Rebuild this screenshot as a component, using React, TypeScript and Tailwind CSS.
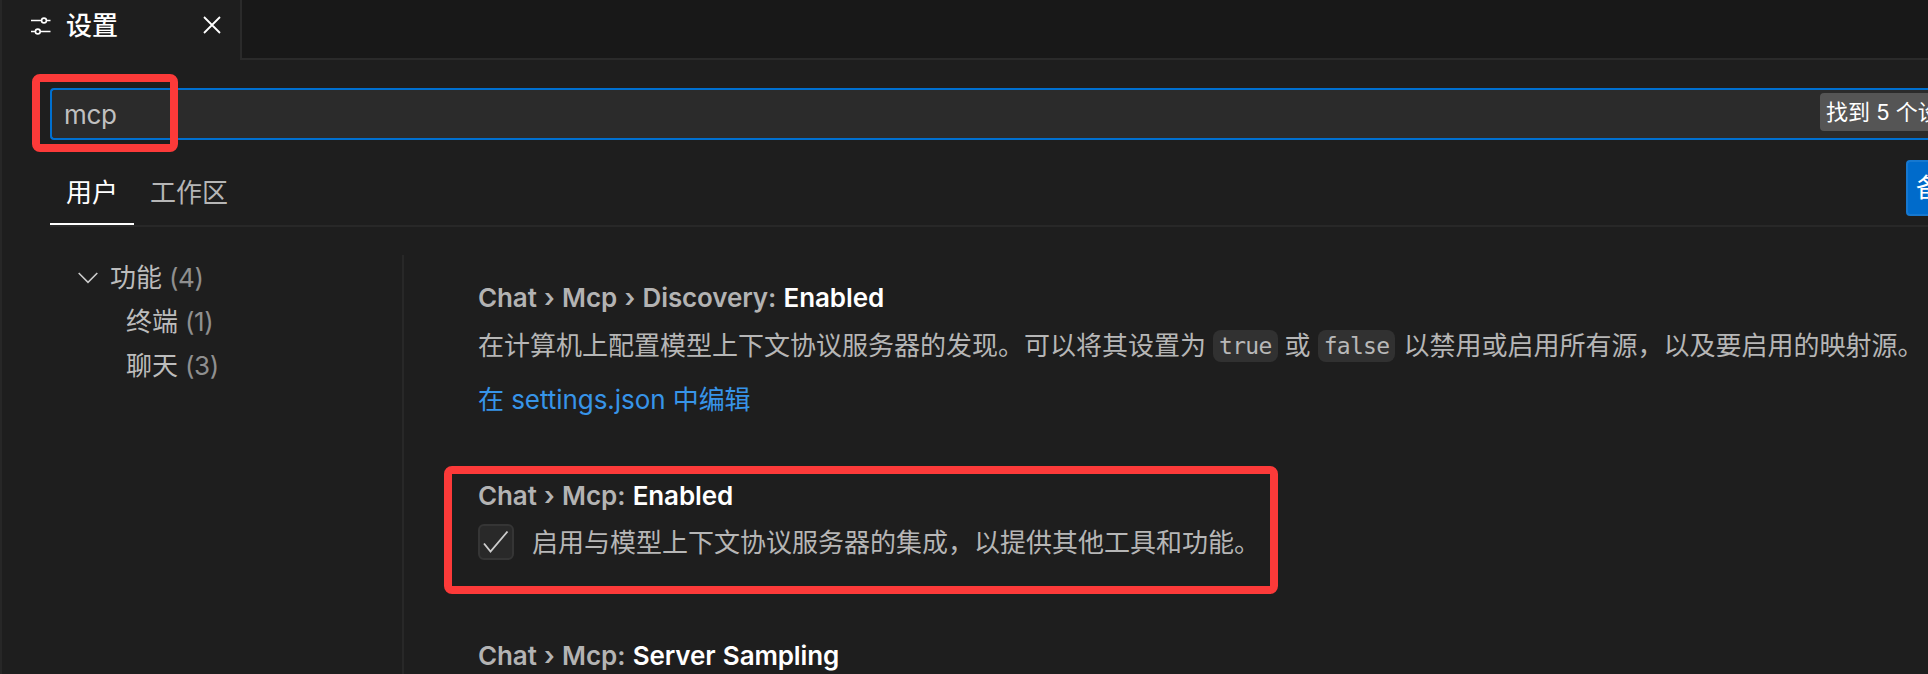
import React from "react";

const Slider = () => (
  <svg width="20" height="20" viewBox="0 0 20 20" fill="none" stroke="#fff" strokeWidth="1.6" className="shrink-0">
    <path d="M0 4.500h10.500M15.500 4.500h4M0 15.500h4M9.500 15.500h10" />
    <circle cx="13" cy="4.500" r="2.400" />
    <circle cx="6.800" cy="15.500" r="2.400" />
  </svg>
);

const Title = ({ path, name }: { path: string; name: string }) => (
  <h3 className="flex h-[36px] items-center whitespace-pre font-semibold tracking-[-0.11px] text-[#b3b3b3] [word-spacing:0.9px]">
    <span>{path} </span>
    <span className="text-white">{name}</span>
  </h3>
);

const Code = ({ children }: { children: React.ReactNode }) => (
  <code className="mx-[7px] flex h-8 items-center rounded-lg bg-[#313131] pl-[6px] pr-[6px] font-['DejaVu_Sans_Mono',monospace] text-[23px] tracking-[-0.7px] text-[#b8b8b8]">
    {children}
  </code>
);

const Row = ({ label, count, indent }: { label: string; count: number; indent?: boolean }) => (
  <div className={indent ? "flex h-11 items-center pl-[126px]" : "flex h-11 items-center pl-[78px]"}>
    {!indent && (
      <svg width="20" height="12" viewBox="0 0 20 12" fill="none" stroke="#ccc" strokeWidth="1.6" className="mr-3">
        <path d="M0.700 1 10 10.300 19.300 1" />
      </svg>
    )}
    <span className="text-[#bcbcbc]">{label}</span>
    <span className="ml-[7px] tracking-[-0.4px] text-[#8f8f8f]">({count})</span>
  </div>
);

export default function App() {
  return (
    <div className="relative flex h-[674px] w-[1928px] flex-col overflow-hidden bg-[#1e1e1e] font-['Inter','Noto_Sans_CJK_SC',sans-serif] text-[26px] leading-[36px] text-[#b6b6b6]">
      <header className="flex h-[60px] shrink-0">
        <div className="flex w-[242px] items-center border-r-2 border-[#2a2a2a] pb-[9px] pl-[31px] pr-[19px] text-white">
          <Slider />
          <span className="ml-[15px] font-medium">设置</span>
          <svg width="18" height="18" viewBox="0 0 18 18" fill="none" stroke="#fff" strokeWidth="1.8" className="mb-px ml-auto">
            <path d="M1 1 17 17M17 1 1 17" />
          </svg>
        </div>
        <div className="flex-1 border-b-2 border-[#2a2a2a] bg-[#181818]" />
      </header>

      <div className="ml-[50px] mt-7 flex h-[52px] shrink-0 items-center rounded-l border-y-2 border-l-2 border-[#0070d0] bg-[#2b2b2b] pl-3">
        <span className="pt-[2px] tracking-[-0.3px] text-[#c0c0c0]">mcp</span>
        <div className="ml-auto mt-[3px] flex h-[38px] w-[108px] items-center self-start overflow-hidden whitespace-nowrap rounded-l bg-[#555] pl-[6px] text-[22px] text-white">
          找到 5 个设置
        </div>
      </div>

      <nav className="ml-[50px] mt-5 flex h-[67px] shrink-0 border-b-2 border-[#282828]">
        <div className="flex w-[84px] items-start justify-center border-b-2 border-white pt-[15px] text-white">用户</div>
        <div className="ml-[16px] pt-[15px]">工作区</div>
        <button className="ml-auto h-14 w-[22px] overflow-hidden whitespace-nowrap rounded-l border-y-2 border-l-2 border-[#1678d0] bg-[#006bcb] pl-2 text-left text-white">
          备份和同步设置
        </button>
      </nav>

      <main className="flex min-h-0 flex-1 pt-7">
        <aside className="w-[404px] shrink-0 border-r-2 border-[#282828] pt-px">
          <Row label="功能" count={4} />
          <Row label="终端" count={1} indent />
          <Row label="聊天" count={3} indent />
        </aside>
        <section className="flex-1 pl-[74px] pt-[25px]">
          <article className="h-[198px]">
            <Title path="Chat › Mcp › Discovery:" name="Enabled" />
            <p className="mt-[12px] flex h-9 items-center whitespace-nowrap">
              在计算机上配置模型上下文协议服务器的发现。可以将其设置为
              <Code>true</Code>或<Code>false</Code>
              <span className="pl-px">以禁用或启用所有源，以及要启用的映射源。</span>
            </p>
            <a className="mt-[18px] block tracking-[-0.06px] text-[#3794e8]">在 settings.json 中编辑</a>
          </article>
          <article className="h-[160px]">
            <Title path="Chat › Mcp:" name="Enabled" />
            <div className="mt-[10px] flex h-9 items-center">
              <div className="flex size-9 items-center justify-center rounded-md border-2 border-[#353535] bg-[#292929]">
                <svg width="26" height="24" viewBox="0 0 26 24" fill="none" stroke="#ccc" strokeWidth="1.900">
                  <path d="M1 13.500 7.500 21.500 24.500 1.500" />
                </svg>
              </div>
              <span className="ml-[18px] whitespace-nowrap pt-[2px]">启用与模型上下文协议服务器的集成，以提供其他工具和功能。</span>
            </div>
          </article>
          <article>
            <Title path="Chat › Mcp:" name="Server Sampling" />
          </article>
        </section>
      </main>

      <div className="absolute inset-y-0 left-0 w-[2px] bg-[#272727]" />
      <div className="absolute left-[32px] top-[74px] h-[78px] w-[146px] rounded-lg border-8 border-[#fc3a39]" />
      <div className="absolute left-[444px] top-[466px] h-[128px] w-[834px] rounded-lg border-8 border-[#fc3a39]" />
    </div>
  );
}
